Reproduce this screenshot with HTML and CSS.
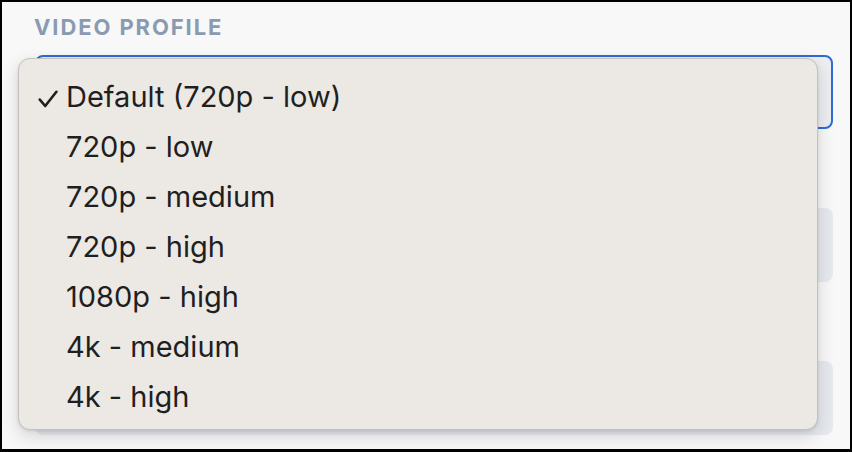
FILE: index.html
```html
<!DOCTYPE html>
<html>
<head>
<meta charset="utf-8">
<link rel="stylesheet" href="styles.css">
</head>
<body>
<div class="frame">
  <div class="form">
    <div class="field">
      <div class="label">VIDEO PROFILE</div>
      <div class="select active"></div>
    </div>
    <div class="field">
      <div class="label"></div>
      <div class="select"></div>
    </div>
    <div class="field">
      <div class="label"></div>
      <div class="select"></div>
    </div>
  </div>
  <ul class="menu">
    <li class="item checked"><svg class="check" width="20" height="18" viewBox="0 0 20 18"><path d="M1.8 9.6 L7.2 16 L18.4 1.8" fill="none" stroke="#1f1f1f" stroke-width="2.6" stroke-linecap="round" stroke-linejoin="round"/></svg>Default (720p - low)</li>
    <li class="item">720p - low</li>
    <li class="item">720p - medium</li>
    <li class="item">720p - high</li>
    <li class="item">1080p - high</li>
    <li class="item">4k - medium</li>
    <li class="item">4k - high</li>
  </ul>
</div>
</body>
</html>
```

FILE: styles.css
```css
* { box-sizing: border-box; }
html, body { margin: 0; padding: 0; }
body { width: 852px; height: 452px; font-family: Inter, "Noto Sans", sans-serif; }
.frame {
  position: relative;
  width: 852px;
  height: 452px;
  border: 2px solid #000;
  border-bottom-width: 3px;
  background: #f8f8f8;
  overflow: hidden;
}
.form {
  padding: 12px 17px 0 33px;
  display: flex;
  flex-direction: column;
  gap: 38px;
}
.field { display: flex; flex-direction: column; gap: 15px; }
.label {
  height: 26px;
  margin-left: -1px;
  font-size: 22px;
  line-height: 26px;
  font-weight: 700;
  letter-spacing: 1.9px;
  color: #8a9bb1;
}
.select {
  height: 74px;
  border-radius: 8px;
  background: #e6e9ee;
}
.select.active {
  border: 2px solid #2f6bd6;
  background: #eceef2;
}
.menu {
  position: absolute;
  left: 16px;
  top: 56px;
  width: 800px;
  height: 372px;
  margin: 0;
  padding: 13px 0 0 47px;
  list-style: none;
  background: #ece8e3;
  border: 1px solid #c4c1be;
  border-radius: 12px;
  box-shadow: 0 6px 18px rgba(0,0,0,0.15), 0 1px 3px rgba(0,0,0,0.1);
}
.item {
  position: relative;
  height: 50px;
  line-height: 50px;
  font-size: 29px;
  color: #1f1f1f;
}
.check {
  position: absolute;
  left: -28px;
  top: 18px;
}
```
